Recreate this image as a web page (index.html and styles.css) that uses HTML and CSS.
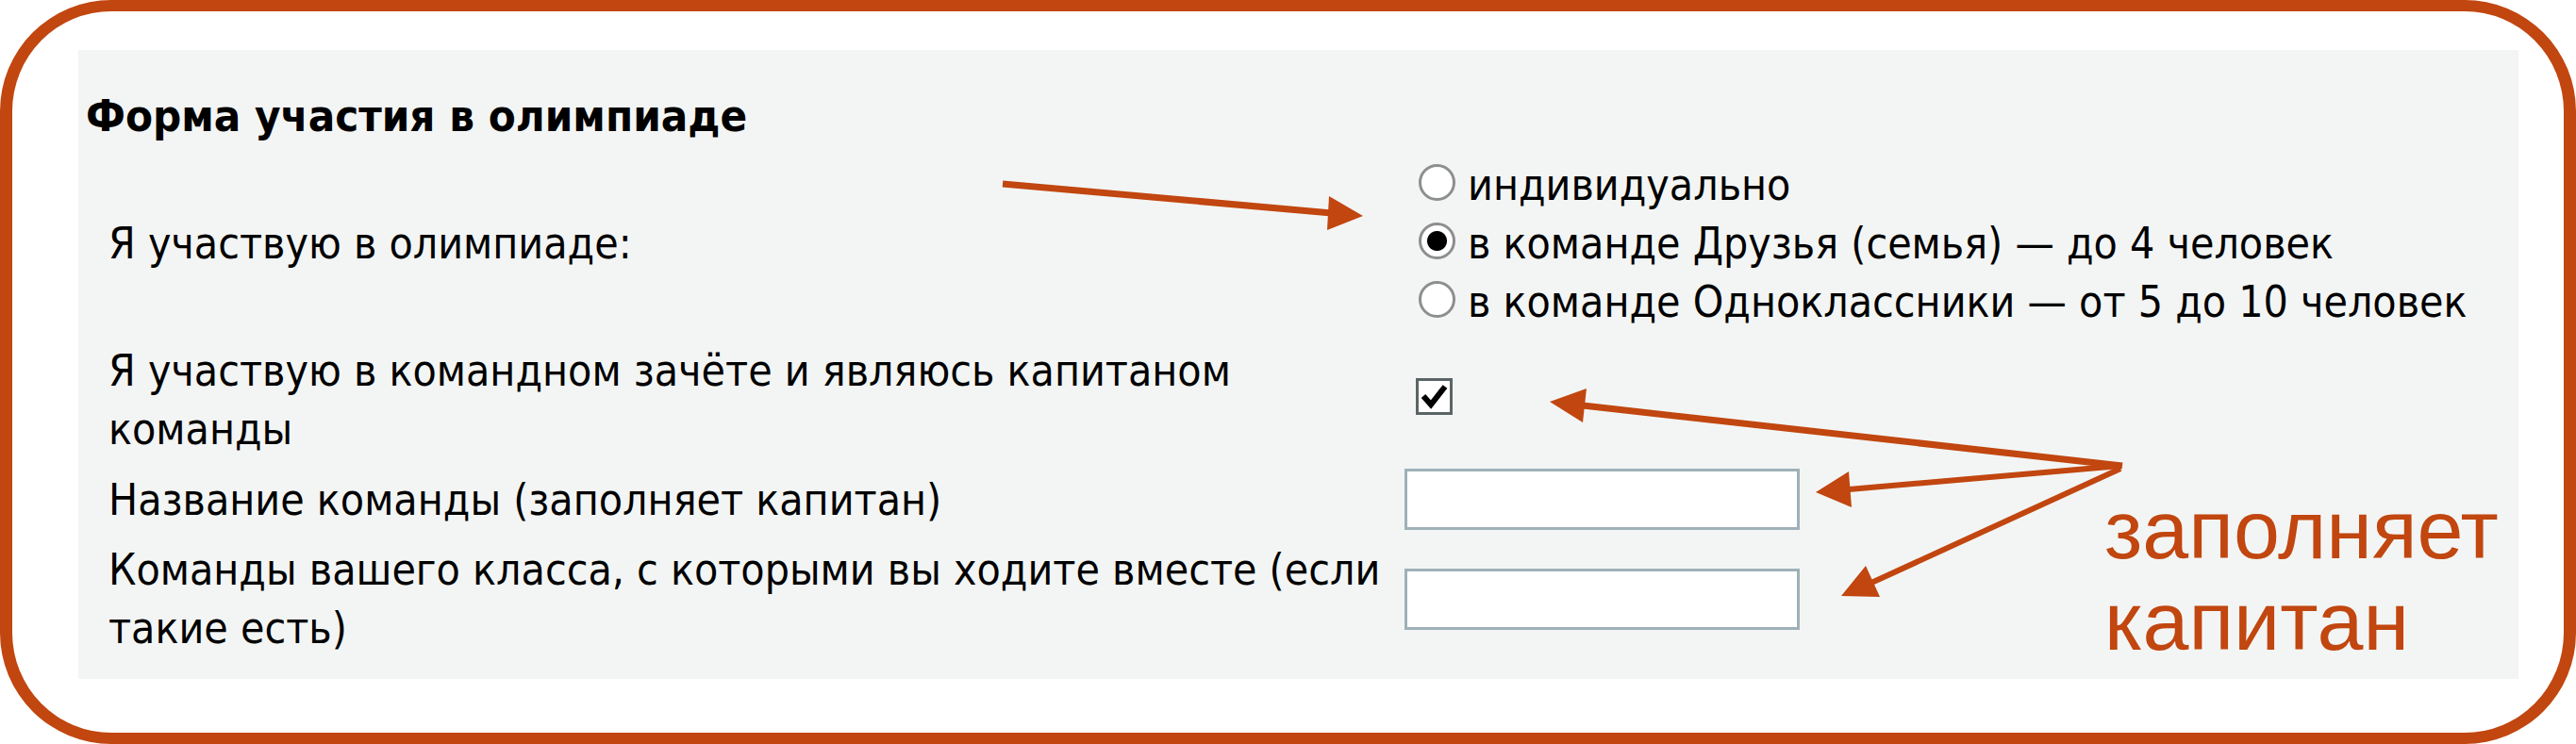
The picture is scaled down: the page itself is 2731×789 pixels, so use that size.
FILE: index.html
```html
<!DOCTYPE HTML>
<html>
<head>
  <title>Форма участия в олимпиаде</title>
  <link rel="stylesheet" href="styles.css">
</head>
<body>
<div class="frame">
  <div class="panel">
    <div class="heading">Форма участия в олимпиаде</div>

    <div class="row">
      <div class="label">Я участвую в олимпиаде:</div>
      <div class="control radios">
        <label class="option"><input type="radio" name="form"> индивидуально</label>
        <label class="option"><input type="radio" name="form" checked> в команде Друзья (семья) — до 4 человек</label>
        <label class="option"><input type="radio" name="form"> в команде Одноклассники — от 5 до 10 человек</label>
      </div>
    </div>

    <div class="row">
      <div class="label">Я участвую в командном зачёте и являюсь капитаном команды</div>
      <div class="control">
        <span class="checkbox">
          <svg width="33" height="33" viewBox="0 0 33 33">
            <polyline points="5,16 13,25 28,6" fill="none" stroke="#000" stroke-width="6"/>
          </svg>
        </span>
      </div>
    </div>

    <div class="row">
      <div class="label">Название команды (заполняет капитан)</div>
      <div class="control"><input type="text" class="field"></div>
    </div>

    <div class="row">
      <div class="label">Команды вашего класса, с которыми вы ходите вместе (если такие есть)</div>
      <div class="control"><input type="text" class="field"></div>
    </div>
  </div>

  <svg class="arrows" width="2731" height="789" viewBox="0 0 2731 789">
    <g fill="#c1460f" stroke="#c1460f">
      <line x1="1063" y1="195" x2="1412" y2="226" stroke-width="7"/>
      <polygon points="1445,229 1409,208 1407,244" stroke="none"/>

      <line x1="2250" y1="494" x2="1678" y2="430" stroke-width="7"/>
      <polygon points="1643,426 1682,412 1678,448" stroke="none"/>

      <line x1="2248" y1="494" x2="1960" y2="519" stroke-width="6"/>
      <polygon points="1925,522 1960,500 1963,538" stroke="none"/>

      <line x1="2248" y1="497" x2="1984" y2="618" stroke-width="6"/>
      <polygon points="1952,632 1978,600 1993,633" stroke="none"/>
    </g>
  </svg>

  <div class="note">заполняет<br>капитан</div>
</div>
</body>
</html>
```

FILE: styles.css
```css
html, body {
  margin: 0;
  padding: 0;
  background: #fff;
}

body {
  font-family: "DejaVu Sans Condensed", "DejaVu Sans", sans-serif;
  font-size: 46px;
  color: #000;
}

.frame {
  position: relative;
  box-sizing: border-box;
  width: 2731px;
  height: 789px;
  border: solid #c1460f;
  border-width: 12px 13px;
  border-radius: 118px;
  padding: 41px 48px 57px 70px;
  background: #fff;
}

.panel {
  box-sizing: border-box;
  height: 667px;
  background: #f3f5f4;
  padding: 39px 0 0 8px;
  display: flex;
  flex-direction: column;
  row-gap: 11px;
}

.heading {
  font-weight: bold;
  font-size: 47px;
  line-height: 62px;
}

.row {
  display: grid;
  grid-template-columns: 1398px 1fr;
  line-height: 62px;
}

.label {
  box-sizing: border-box;
  padding: 0 4px 0 24px;
  align-self: center;
}

.control {
  align-self: center;
  display: flex;
  align-items: center;
}

.radios {
  flex-direction: column;
  align-items: flex-start;
}

.option {
  display: flex;
  align-items: center;
  height: 62px;
  white-space: nowrap;
}

.option input {
  appearance: none;
  -webkit-appearance: none;
  box-sizing: border-box;
  width: 39px;
  height: 39px;
  margin: 0 13px 6px 15px;
  border: 3px solid #8d8f8f;
  border-radius: 50%;
  background: #fff;
}

.option input:checked {
  background: radial-gradient(circle, #000 0, #000 10px, #fff 11px);
}

.checkbox {
  box-sizing: border-box;
  width: 39px;
  height: 39px;
  margin: 0 0 8px 12px;
  border: 3px solid #5b6566;
  background: #fff;
  display: flex;
}

.field {
  box-sizing: border-box;
  width: 419px;
  height: 65px;
  margin: 0;
  border: 3px solid #9fb1b8;
  background: #fff;
  font: inherit;
}

.arrows {
  position: absolute;
  left: -13px;
  top: -12px;
}

.note {
  position: absolute;
  left: 2218px;
  top: 501px;
  font-family: "Liberation Sans", Arial, sans-serif;
  font-size: 88px;
  line-height: 97px;
  color: #c1460f;
}
```
